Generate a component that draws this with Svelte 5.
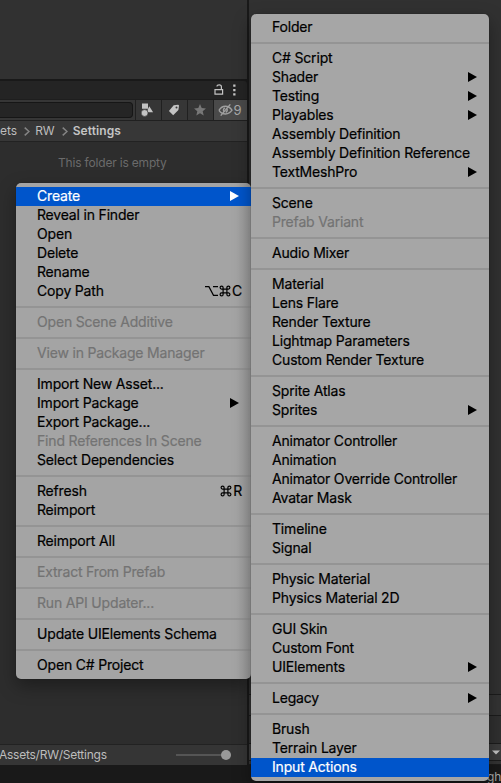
<script>
  const sep = '-';
  const create = [
    'Folder', sep,
    'C# Script', 'Shader>', 'Testing>', 'Playables>', 'Assembly Definition', 'Assembly Definition Reference', 'TextMeshPro>', sep,
    'Scene', '~Prefab Variant', sep,
    'Audio Mixer', sep,
    'Material', 'Lens Flare', 'Render Texture', 'Lightmap Parameters', 'Custom Render Texture', sep,
    'Sprite Atlas', 'Sprites>', sep,
    'Animator Controller', 'Animation', 'Animator Override Controller', 'Avatar Mask', sep,
    'Timeline', 'Signal', sep,
    'Physic Material', 'Physics Material 2D', sep,
    'GUI Skin', 'Custom Font', 'UIElements>', sep,
    'Legacy>', sep,
    'Brush', 'Terrain Layer', '*Input Actions'
  ];
  const context = [
    '*Create>', 'Reveal in Finder', 'Open', 'Delete', 'Rename', 'Copy Path|⌥⌘C', sep,
    '~Open Scene Additive', sep,
    '~View in Package Manager', sep,
    'Import New Asset...', 'Import Package>', 'Export Package...', '~Find References In Scene', 'Select Dependencies', sep,
    'Refresh|⌘R', 'Reimport', sep,
    'Reimport All', sep,
    '~Extract From Prefab', sep,
    '~Run API Updater...', sep,
    'Update UIElements Schema', sep,
    'Open C# Project'
  ];
  const parse = (s) => {
    const [name, keys = ''] = s.split('|');
    return {
      sep: s === sep,
      active: s[0] === '*',
      disabled: s[0] === '~',
      sub: s.endsWith('>'),
      label: name.replace(/^[*~]/, '').replace('>', ''),
      keys
    };
  };
</script>

{#snippet menu(items, side)}
  <div class="menu {side}">
    {#each items.map(parse) as it}
      {#if it.sep}
        <div class="sep"></div>
      {:else}
        <div class="item" class:active={it.active} class:disabled={it.disabled}>
          <span class="label">{it.label}</span>
          {#if it.sub}
            <svg class="arrow" width="9" height="10" viewBox="0 0 9 10"><path d="M0 0 9 5 0 10z" fill="currentColor" /></svg>
          {/if}
          {#if it.keys}
            <span class="keys">
              {#each it.keys as k}
                {#if k === '⌘'}
                  <svg width="12" height="12" viewBox="0 0 12 12" fill="none" stroke="currentColor" stroke-width="1.2"><path d="M4.1 4.1h3.8v3.8H4.1zM4.1 4.1H2.6a1.5 1.5 0 1 1 1.5-1.5zM7.9 4.1V2.6a1.5 1.5 0 1 1 1.5 1.5zM7.9 7.9h1.5a1.5 1.5 0 1 1-1.5 1.5zM4.1 7.9v1.5a1.5 1.5 0 1 1-1.5-1.5z" /></svg>
                {:else if k === '⌥'}
                  <svg width="13" height="12" viewBox="0 0 13 12" fill="none" stroke="currentColor" stroke-width="1.2"><path d="M0 1.6h3.9l4.6 8.8H13M8 1.6h5" /></svg>
                {:else}
                  <span class="label">{k}</span>
                {/if}
              {/each}
            </span>
          {/if}
        </div>
      {/if}
    {/each}
  </div>
{/snippet}

<div class="screen">
  <div class="work">
    <div class="project">
      <div class="upper"></div>
      <div class="tabs">
        <svg width="10" height="11" viewBox="0 0 10 11" fill="none" stroke="#c4c4c4" stroke-width="1.2"><path d="M1 5.6h7.6v4.6H1zM7.4 5.4V2.7Q7.4.8 5.2.8T3 2.6" /></svg>
        <svg class="dots" width="3" height="12" viewBox="0 0 3 12" fill="#c4c4c4"><path d="M.2.5h2.3v2.3H.2zM.2 4.9h2.3v2.3H.2zM.2 9.2h2.3v2.3H.2z" /></svg>
      </div>
      <div class="tools">
        <div class="searchwrap"><div class="search"></div></div>
        <div class="btn">
          <svg width="13" height="14" viewBox="0 0 13 14" fill="#c4c4c4"><path d="M1 .5h6v5.2H1zM8.3 3.2l3.8 6H7.3L6.5 7z" /><circle cx="3.6" cy="10" r="3.4" stroke="#383838" stroke-width=".6" /></svg>
        </div>
        <div class="btn">
          <svg width="12" height="12" viewBox="0 0 12 12"><path d="M5.7 1.3 10 .8q1 0 1 1l-.6 4.1-5.2 5.3L.9 7z" fill="#c4c4c4" /><circle cx="8.5" cy="3.5" r="1" fill="#383838" /></svg>
        </div>
        <div class="btn">
          <svg width="12" height="12" viewBox="0 0 12 12" fill="#777"><path d="m6 0 1.7 4.1 4.3.3-3.3 2.8 1 4.4L6 9.2l-3.7 2.4 1-4.4L0 4.4l4.3-.3z" /></svg>
        </div>
        <div class="btn eye">
          <svg width="15" height="12" viewBox="0 0 15 12" fill="none" stroke="#a0a0a0" stroke-width="1.4"><path d="M1 6.4Q3.5 2.3 7.4 2.3T14 6.2Q11.5 10 7.5 10T1 6.4" /><path d="M6.9 3.8Q4.5 5.4 6 7.6M8.9 4.7q1.1 2.3-1.2 3.6" /><path d="M12.3.4 2.7 11.6" /></svg>
          <span>9</span>
        </div>
      </div>
      <div class="crumbs">
        <span class="c1">ets</span>
        <svg width="6" height="9" viewBox="0 0 6 9" fill="none" stroke="#858585" stroke-width="1.5"><path d="M.7.6 5 4.5.7 8.4" /></svg>
        <span class="c2">RW</span>
        <svg width="6" height="9" viewBox="0 0 6 9" fill="none" stroke="#858585" stroke-width="1.5"><path d="M.7.6 5 4.5.7 8.4" /></svg>
        <b>Settings</b>
      </div>
      <div class="body">This folder is empty</div>
      <div class="foot"><span>Assets/RW/Settings</span><div class="slider"><i></i></div></div>
    </div>
    <div class="inspector">
      <div class="r1"></div>
      <div class="r2"></div>
      <div class="r3"></div>
      <div class="r4"><svg width="8" height="5" viewBox="0 0 8 5"><path d="M0 .5h8l-4 4z" fill="#c4c4c4" /></svg></div>
      <div class="r5"></div>
    </div>
  </div>
  <div class="status">gh</div>
  {@render menu(context, 'left')}
  {@render menu(create, 'right')}
</div>

<style>
  .screen {
    position: relative;
    width: 501px;
    height: 783px;
    overflow: hidden;
    background: #191919;
    font-family: Inter, "Liberation Sans", sans-serif;
    white-space: nowrap;
  }
  .screen * { box-sizing: border-box; }
  svg { display: block; flex: none; }
  .work { display: flex; gap: 2px; height: 765px; }
  .project { width: 247px; display: flex; flex-direction: column; }
  .upper { height: 79px; background: #313131; }
  .tabs {
    height: 18px; margin-top: 2px; background: #242424; border-radius: 0 3px 0 0;
    display: flex; align-items: center; justify-content: flex-end; padding: 0 11px 1px 0; gap: 9px;
  }
  .tools { height: 22px; border-top: 1px solid #1e1e1e; border-bottom: 1px solid #202020; background: #363636; display: flex; }
  .searchwrap { flex: 1; padding: 2px 2px 2px 0; }
  .search { height: 16px; background: #252525; border: 1px solid #161616; border-left: 0; border-radius: 0 4px 4px 0; }
  .btn { width: 26px; border-left: 1px solid #202020; display: flex; align-items: center; justify-content: center; padding: 0 1px 1px 0; }
  .btn:nth-child(2) { padding-right: 2px; }
  .eye { width: 34px; background: #4a4a4a; color: #aaa; font-size: 13px; }
  .crumbs {
    height: 21px; background: #373737; border-bottom: 1px solid #222; padding-bottom: 1px;
    display: flex; align-items: center; color: #bdbdbd; font-size: 12px;
  }
  .crumbs svg { margin: 1px 5px 0 7px; }
  .crumbs b { font-weight: 600; color: #c4c4c4; letter-spacing: .1px; }
  .body { flex: 1; background: #2d2d2d; color: #6b6b6b; font-size: 12px; letter-spacing: -.18px; line-height: 15px; padding: 13px 0 0 58px; }
  .foot {
    height: 21px; border-top: 1px solid #222; background: #353535; color: #bdbdbd; font-size: 12px;
    display: flex; align-items: center; justify-content: space-between; padding-right: 16px;
  }
  .foot span { margin-left: -1px; letter-spacing: -.25px; padding-bottom: 1px; }
  .slider { width: 55px; height: 2px; background: #555; display: flex; align-items: center; justify-content: flex-end; }
  .slider i { width: 10px; height: 10px; border-radius: 50%; background: #999; }
  .inspector { flex: 1; display: flex; flex-direction: column; background: #313131; }
  .inspector div { border-bottom: 1px solid #1c1c1c; }
  .r1 { height: 695px; }
  .r2 { height: 21px; background: #343434; }
  .r3 { height: 28px; background: #303030; }
  .r4 { height: 17px; background: #3c3c3c; display: flex; align-items: center; justify-content: flex-end; padding-right: 1px; }
  .r5 { height: 4px; background: #343434; }
  .status { height: 18px; padding: 4px 0 0 487px; font-size: 12px; line-height: 16px; color: #aaa; }

  .menu {
    position: absolute;
    padding: 4px 0;
    background: #a6a6a6;
    border-radius: 5px;
    box-shadow: 0 7px 18px rgba(0, 0, 0, .35), 0 0 1px rgba(0, 0, 0, .6);
    font-size: 14px;
    letter-spacing: -.18px;
    -webkit-text-stroke: .2px currentColor;
    color: #000;
    overflow: hidden;
  }
  .left { left: 16px; top: 183px; width: 235px; background: linear-gradient(90deg, #a4a4a4 94%, #999); }
  .right { left: 251px; top: 14px; width: 238px; }
  .item { height: 19px; padding: 0 9px 0 21px; display: flex; align-items: center; justify-content: space-between; }
  .label { line-height: 17px; padding-bottom: 2px; }
  .arrow { margin: 0 3px 1px 0; }
  .sep { height: 12px; padding-top: 5px; }
  .sep::before { content: ""; display: block; height: 2px; background: #949494; }
  .active { background: #0055cb; color: #fff; }
  .disabled { color: #737373; }
  .keys { display: flex; align-items: center; gap: 1px; }
  .keys svg { margin-bottom: 1px; }
</style>
